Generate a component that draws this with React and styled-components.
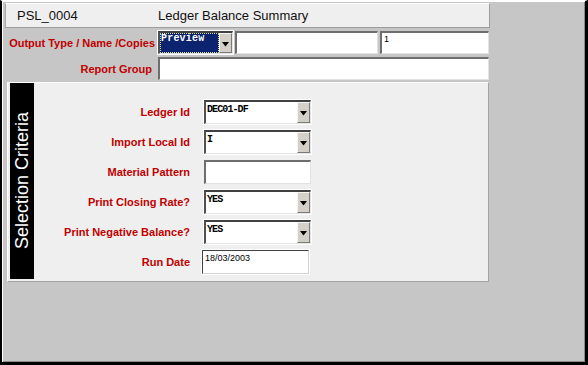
import React from 'react';
import styled, { createGlobalStyle } from 'styled-components';

const GlobalStyle = createGlobalStyle`
  html, body {
    margin: 0;
    padding: 0;
  }
  body {
    background: #c6c6c6;
    font-family: "Liberation Sans", Arial, sans-serif;
  }
`;

const Window = styled.div`
  box-sizing: border-box;
  width: 588px;
  height: 365px;
  background: #c6c6c6;
  border-top: 1px solid #ffffff;
  border-left: 2px solid #000000;
  border-right: 3px solid #000000;
  border-bottom: 3px solid #000000;
  box-shadow: inset 1px 1px 0 #ffffff, inset -1px -1px 0 #8a8a8a;
  padding: 2px 0 0 3px;
`;

const Header = styled.div`
  box-sizing: border-box;
  width: 485px;
  height: 25px;
  display: flex;
  align-items: center;
  background: #efefef;
  border: 1px solid;
  border-color: #ffffff #9c9c9c #9c9c9c #a8a8a8;
  font-size: 13px;
  color: #111111;
`;

const Code = styled.span`
  width: 141px;
  padding-left: 11px;
`;

const Title = styled.span``;

const Row = styled.div`
  display: flex;
  align-items: center;
  height: 23px;
  margin-top: ${p => p.$top}px;
`;

const RowLabel = styled.label`
  box-sizing: border-box;
  width: 153px;
  padding-right: ${p => p.$pad}px;
  text-align: right;
  font-size: 11px;
  font-weight: bold;
  color: #c00000;
  white-space: nowrap;
`;

const Controls = styled.div`
  display: flex;
  gap: 2px;
  height: 100%;
`;

const TextBox = styled.div`
  box-sizing: border-box;
  width: ${p => p.$w}px;
  height: 100%;
  background: #ffffff;
  border-style: solid;
  border-width: 2px 1px 1px 2px;
  border-color: #6e6e6e #e2e2e2 #e2e2e2 #6e6e6e;
  font-size: 9px;
  color: #000000;
  padding: 1px 2px;
  line-height: 10px;
`;

const SelectBox = styled.div`
  box-sizing: border-box;
  width: ${p => p.$w}px;
  height: ${p => p.$h}px;
  display: flex;
  background: #ffffff;
  border-style: solid;
  border-width: 2px 1px 1px 2px;
  border-color: #404040 #e4e4e4 #e4e4e4 #505050;
  box-shadow: 0 0 0 1px #ffffff;
`;

const SelectValue = styled.div`
  flex: 1;
  box-sizing: border-box;
  padding: ${p => (p.$focused ? '1px 1px' : '3px 1px')};
  background: ${p => (p.$focused ? '#0c2470' : '#ffffff')};
  outline: ${p => (p.$focused ? '1px dotted #d8d890' : 'none')};
  outline-offset: -1px;
  color: ${p => (p.$focused ? '#ffffff' : '#000000')};
  font-family: "Liberation Mono", "Courier New", monospace;
  font-weight: bold;
  font-size: 10px;
  line-height: 10px;
  letter-spacing: ${p => (p.$focused ? '0.2px' : '-0.9px')};
  white-space: nowrap;
  overflow: hidden;
`;

const DropButton = styled.div`
  box-sizing: border-box;
  width: 13px;
  display: flex;
  align-items: center;
  justify-content: center;
  padding-top: 2px;
  background: #d4d0c8;
  border-style: solid;
  border-width: 1px;
  border-color: #f4f4f4 #7a7a7a #7a7a7a #f4f4f4;
`;

const Panel = styled.div`
  box-sizing: border-box;
  width: 482px;
  height: 200px;
  margin: 2px 0 0 2px;
  display: flex;
  background: #efefef;
  border: 1px solid;
  border-color: #ffffff #a4a4a4 #a4a4a4 #ffffff;
  padding: 0 2px 2px 2px;
`;

const SideBar = styled.div`
  width: 24px;
  background: #000000;
  display: flex;
  align-items: center;
  justify-content: center;
`;

const SideText = styled.span`
  writing-mode: vertical-rl;
  transform: rotate(180deg);
  color: #ffffff;
  font-size: 18px;
  white-space: nowrap;
`;

const Fields = styled.div`
  display: grid;
  grid-template-columns: 156px 107px;
  grid-auto-rows: 24px;
  column-gap: 14px;
  row-gap: 6px;
  padding-top: 17px;
  align-content: start;
`;

const FieldLabel = styled.label`
  align-self: center;
  text-align: right;
  font-size: 11px;
  font-weight: bold;
  color: #c00000;
  white-space: nowrap;
`;

const DateBox = styled.div`
  box-sizing: border-box;
  width: 107px;
  height: 24px;
  margin-left: -2px;
  background: #ffffff;
  border: 1px solid;
  border-color: #404040 #d4d4d4 #d4d4d4 #404040;
  box-shadow: 0 0 0 1px #ffffff;
  padding: 2px 2px;
  font-size: 9px;
  line-height: 10px;
  color: #000000;
`;

const Arrow = () => (
  <svg width="7" height="5" viewBox="0 0 7 5">
    <polygon points="0,0 7,0 3.5,4.5" fill="#000" />
  </svg>
);

const Select = ({ value, width, height = 24, focused }) => (
  <SelectBox $w={width} $h={height}>
    <SelectValue $focused={focused}>{value}</SelectValue>
    <DropButton>
      <Arrow />
    </DropButton>
  </SelectBox>
);

const criteria = [
  { label: 'Ledger Id', type: 'select', value: 'DEC01-DF' },
  { label: 'Import Local Id', type: 'select', value: 'I' },
  { label: 'Material Pattern', type: 'text', value: '' },
  { label: 'Print Closing Rate?', type: 'select', value: 'YES' },
  { label: 'Print Negative Balance?', type: 'select', value: 'YES' },
  { label: 'Run Date', type: 'date', value: '18/03/2003' },
];

const App = () => {
  return (
    <>
      <GlobalStyle />
      <Window>
        <Header>
          <Code>PSL_0004</Code>
          <Title>Ledger Balance Summary</Title>
        </Header>

        <Row $top={3}>
          <RowLabel $pad={3}>Output Type / Name /Copies</RowLabel>
          <Controls>
            <Select value="Preview" width={75} height={23} focused />
            <TextBox $w={143} />
            <TextBox $w={109}>1</TextBox>
          </Controls>
        </Row>

        <Row $top={3}>
          <RowLabel $pad={6}>Report Group</RowLabel>
          <Controls>
            <TextBox $w={331} />
          </Controls>
        </Row>

        <Panel>
          <SideBar>
            <SideText>Selection Criteria</SideText>
          </SideBar>
          <Fields>
            {criteria.map(item => (
              <React.Fragment key={item.label}>
                <FieldLabel>{item.label}</FieldLabel>
                {item.type === 'select' && <Select value={item.value} width={107} />}
                {item.type === 'text' && <TextBox $w={107} />}
                {item.type === 'date' && <DateBox>{item.value}</DateBox>}
              </React.Fragment>
            ))}
          </Fields>
        </Panel>
      </Window>
    </>
  );
};

export default App;
